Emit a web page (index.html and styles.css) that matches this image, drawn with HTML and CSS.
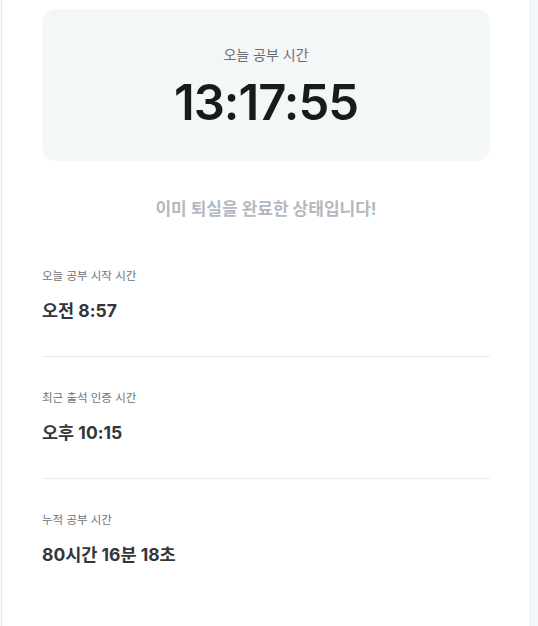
FILE: index.html
```html
<!DOCTYPE html>
<html lang="ko">
<head>
  <meta charset="UTF-8" />
  <meta name="viewport" content="width=device-width, initial-scale=1.0"/>
  <title>공부 시간</title>
  <link rel="stylesheet" href="styles.css">
</head>
<body>
  <div class="study-card">
    <div class="timer-box">
      <div class="timer-label">오늘 공부 시간</div>
      <div class="timer-value">13:17:55</div>
    </div>

    <div class="status-message">이미 퇴실을 완료한 상태입니다!</div>

    <div class="info-list">
      <div class="info-row">
        <div class="info-label">오늘 공부 시작 시간</div>
        <div class="info-value">오전 8:57</div>
      </div>
      <div class="info-row">
        <div class="info-label">최근 출석 인증 시간</div>
        <div class="info-value">오후 10:15</div>
      </div>
      <div class="info-row">
        <div class="info-label">누적 공부 시간</div>
        <div class="info-value">80시간 16분 18초</div>
      </div>
    </div>
  </div>
</body>
</html>
```

FILE: styles.css
```css
body {
  margin: 0;
  font-family: Inter, "Noto Sans CJK KR", sans-serif;
  background-color: #f5f8fa;
  min-height: 100vh;
}

.study-card {
  box-sizing: border-box;
  width: 530px;
  min-height: 626px;
  margin-left: 1px;
  padding: 9px 40px 40px;
  background-color: #fff;
  border-left: 1px solid #e5eaef;
  border-right: 1px solid #e5eaef;
}

.timer-box {
  height: 152px;
  box-sizing: border-box;
  padding-top: 36px;
  border-radius: 14px;
  background-color: #f4f7f8;
  text-align: center;
}

.timer-label {
  font-size: 14px;
  line-height: 20px;
  color: #6b6f75;
}

.timer-value {
  margin-top: 8px;
  font-size: 49px;
  font-weight: 600;
  line-height: 60px;
  color: #191a1c;
  letter-spacing: -1px;
}

.status-message {
  margin-top: 36px;
  font-size: 17px;
  font-weight: 700;
  line-height: 24px;
  text-align: center;
  color: #b2b9c1;
}

.info-list {
  margin-top: 30px;
}

.info-row {
  padding: 16px 0 33px;
  border-bottom: 1px solid #e8ecef;
}

.info-row + .info-row {
  padding-top: 32px;
}

.info-row:last-child {
  border-bottom: none;
}

.info-label {
  font-size: 11.5px;
  line-height: 18px;
  color: #6e737a;
}

.info-value {
  margin-top: 14px;
  font-size: 17.5px;
  font-weight: 700;
  line-height: 24px;
  color: #33363b;
}
```
